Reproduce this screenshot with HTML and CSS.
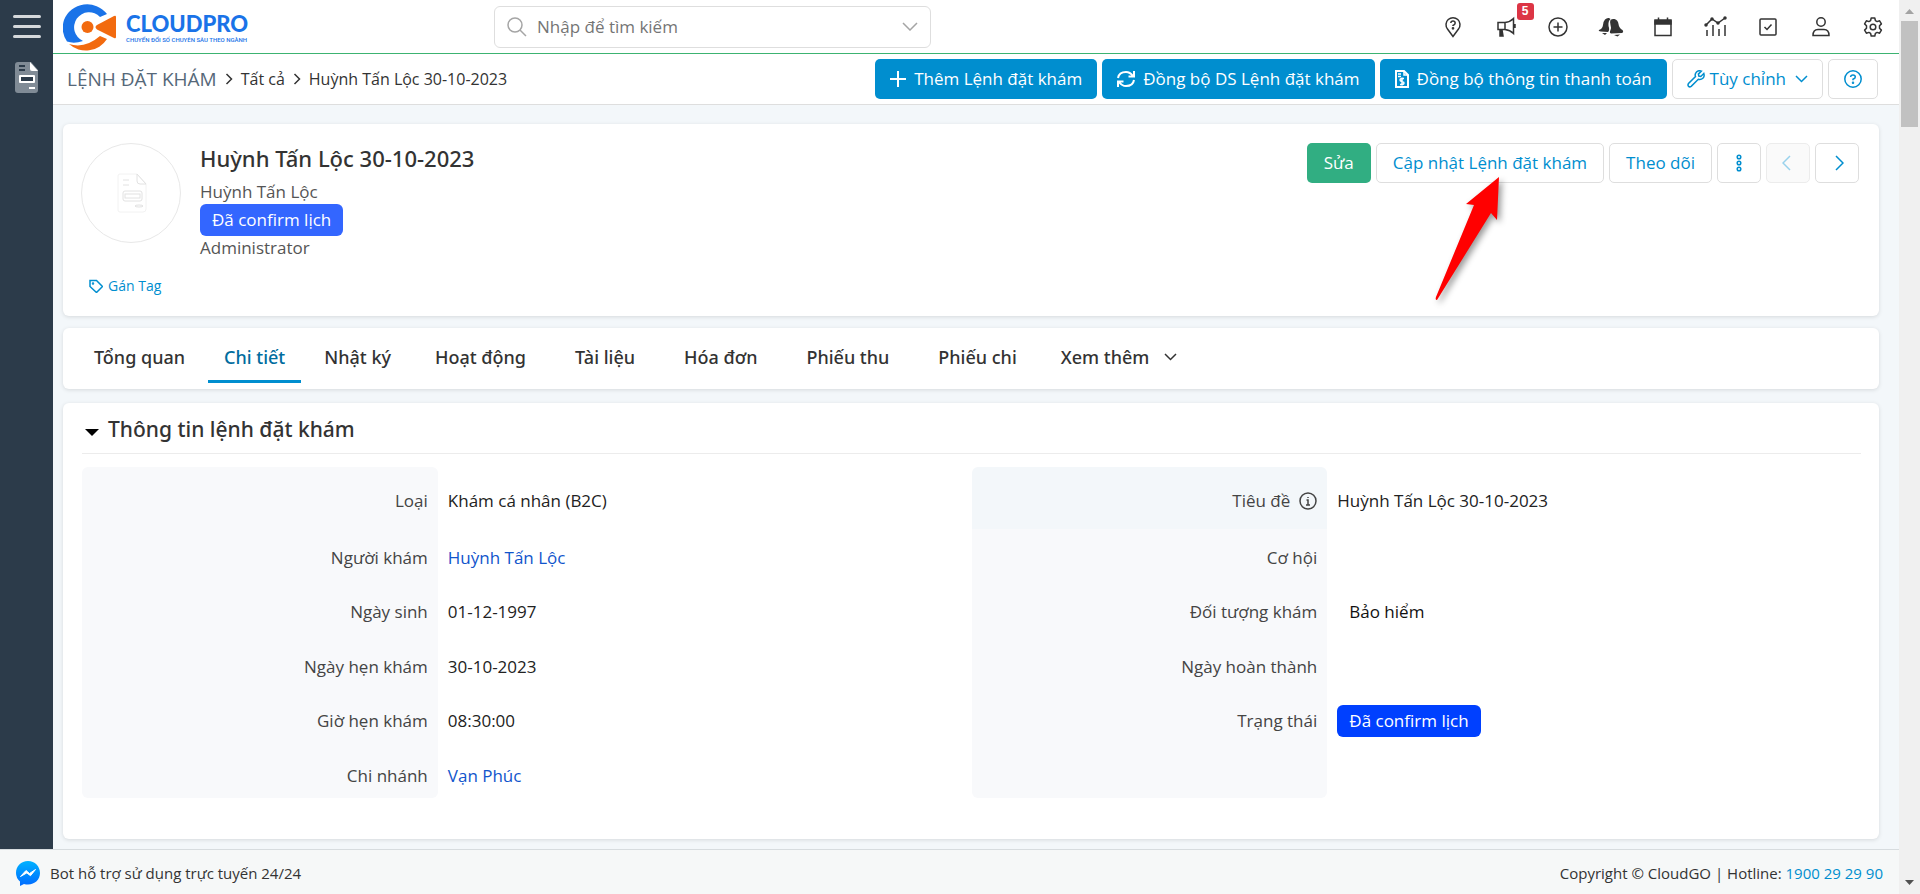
FILE: index.html
```html
<!DOCTYPE html>
<html lang="vi">
<head>
<meta charset="utf-8">
<title>Lệnh đặt khám - CloudPro</title>
<link rel="stylesheet" href="styles.css">
</head>
<body>
<div class="app">
  <div class="shell">
    <nav class="sidebar" aria-label="Menu chính">
      <button class="menu-toggle" aria-label="Mở menu"><span></span><span></span><span></span></button>
      <a class="side-link" href="#" aria-label="Lệnh đặt khám">
        <svg width="24" height="31" viewBox="0 0 24 31"><path d="M3 0h13l7 8v20a3 3 0 0 1-3 3H3a3 3 0 0 1-3-3V3a3 3 0 0 1 3-3z" fill="#808b96"/><path d="M15 0l8 9h-6a2 2 0 0 1-2-2z" fill="#fff"/><path d="M4 4h6M4 8h6" stroke="#2c3b4a" stroke-width="2"/><rect x="4" y="13" width="16" height="8" rx="1" fill="#fff"/><path d="M6 17h12" stroke="#2c3b4a" stroke-width="4"/><path d="M14 26h6" stroke="#fff" stroke-width="2"/></svg>
      </a>
    </nav>
    <div class="page">
      <header class="topbar">
        <a class="logo" href="#" aria-label="CloudPro">
          <svg width="54" height="52" viewBox="0 0 54 50"><path d="M44 12A25 25 0 0 0 1 18A25 25 0 0 0 4 39.500Q11 42 20 39A15 15 0 1 1 37 15z" fill="#1a73e8"/><path d="M6 42Q22 47 37 34L44 37A25 25 0 0 1 6 42z" fill="#f26a0f"/><circle cx="24.500" cy="25" r="6" fill="#f26a0f"/><path d="M34 23L51 14Q53 13 53 15V35Q53 37 51 36L34 27.500Q31 25 34 23z" fill="#f26a0f"/></svg>
          <span class="logo-words"><b>CLOUDPRO</b><small>CHUYỂN ĐỔI SỐ CHUYÊN SÂU THEO NGÀNH</small></span>
        </a>
        <form class="search" role="search">
          <svg width="20" height="20" viewBox="0 0 20 20" class="line"><circle cx="8" cy="8" r="7"/><path d="M13 13l6 6"/></svg>
          <input type="search" aria-label="Tìm kiếm" placeholder="Nhập để tìm kiếm">
          <button type="button" aria-label="Tùy chọn tìm kiếm"><svg width="16" height="9" viewBox="0 0 16 9" class="line"><path d="M1 1l7 7 7-7"/></svg></button>
        </form>
        <div class="tools">
          <button aria-label="Hướng dẫn"><svg width="22" height="22" viewBox="0 0 22 22" class="line"><path d="M11 20.500L5.500 13A7 7 0 1 1 16.500 13z"/><path d="M8.800 7Q9 5 11 5t2.200 2Q13.200 8.300 11 9.500V10"/><circle cx="11" cy="12.300" r=".6"/></svg></button>
          <button aria-label="Thông báo mới"><svg width="22" height="22" viewBox="0 0 22 22" class="line"><path d="M10 6.500H3v7h7M10 6.500Q15 6 18.500 2.500v15Q15 14 10 13.500zM20 8v4"/><path d="M5 14v6h3l-1-6z" fill="currentColor"/></svg><span class="count">5</span></button>
          <button aria-label="Thêm nhanh"><svg width="22" height="22" viewBox="0 0 22 22" class="line"><circle cx="11" cy="11" r="9"/><path d="M11 6.500v9M6.500 11h9"/></svg></button>
          <button aria-label="Chuông báo"><svg width="26" height="22" viewBox="0 0 26 22"><path d="M11 2Q9 1.500 7 3.500Q5.500 5 5 9T1 14Q0 15 3 15.500l7 .5Q12 14 10.500 10Q10 5 12.500 3zM12.500 4Q14 2.500 16.500 3Q20 4 20.500 8t4 6Q26 16 24 17l-11 .5Q11 17 12.500 14Q13.500 12 12.500 9T12.500 4zM4 17h5l-2 2zM16 19l6-.5-2.500 2z" fill="currentColor"/></svg></button>
          <button aria-label="Lịch"><svg width="22" height="22" viewBox="0 0 22 22" class="line"><path d="M3 5h16v14.500H3z"/><path d="M3 4h16v4H3zM6.500 1.500v3M15.500 1.500v3" fill="currentColor"/></svg></button>
          <button aria-label="Báo cáo"><svg width="24" height="22" viewBox="0 0 24 22" class="line"><path d="M2 9l6-6 6 4 7-5M3 14v6M9 9v11M15 13v7M21 9v11"/><g fill="currentColor"><circle cx="2" cy="9" r="1"/><circle cx="8" cy="3" r="1"/><circle cx="14" cy="7" r="1"/><circle cx="21" cy="2" r="1"/></g></svg></button>
          <button aria-label="Công việc"><svg width="22" height="22" viewBox="0 0 22 22" class="line"><rect x="3" y="3" width="16" height="16" rx="1"/><path d="M7.500 11l2.500 2.500 4.500-5"/></svg></button>
          <button aria-label="Tài khoản"><svg width="22" height="22" viewBox="0 0 22 22" class="line"><circle cx="11" cy="6" r="4.200"/><path d="M3 19.500q0-6 5-6h6q5 0 5 6z"/></svg></button>
          <button aria-label="Cài đặt"><svg width="22" height="22" viewBox="0 0 22 22" class="line"><circle cx="11" cy="11" r="2.800"/><path d="M9.200 2h3.600l.6 2.600 1.700 1 2.500-.8 1.800 3.100-1.900 1.900v2.400l1.900 1.900-1.800 3.100-2.500-.8-1.700 1-.6 2.600H9.200l-.6-2.600-1.700-1-2.500.8-1.800-3.100 1.900-1.900V9.800L2.600 7.900l1.800-3.100 2.500.8 1.700-1z" stroke-linejoin="round"/></svg></button>
        </div>
      </header>

      <div class="crumb-bar">
        <nav class="crumbs" aria-label="Đường dẫn">
          <a class="module" href="#">LỆNH ĐẶT KHÁM</a>
          <svg width="8" height="12" viewBox="0 0 8 12" class="line"><path d="M1.500 1l5 5-5 5"/></svg>
          <a href="#">Tất cả</a>
          <svg width="8" height="12" viewBox="0 0 8 12" class="line"><path d="M1.500 1l5 5-5 5"/></svg>
          <span>Huỳnh Tấn Lộc 30-10-2023</span>
        </nav>
        <div class="actions">
          <button class="btn primary"><svg width="16" height="16" viewBox="0 0 16 16" class="line"><path d="M8 0v16M0 8h16" stroke-width="2"/></svg>Thêm Lệnh đặt khám</button>
          <button class="btn primary"><svg width="18" height="18" viewBox="0 0 18 18" class="line"><path d="M1 8Q2 2 9 2q4 0 7 4M17 1v5.500h-5.500M17 10q-1 6-8 6-4 0-7-4M1 17v-5.500h5.500" stroke-width="2"/></svg>Đồng bộ DS Lệnh đặt khám</button>
          <button class="btn primary"><svg width="14" height="18" viewBox="0 0 14 18" class="line"><path d="M1 1h8l4 4v12H1z" stroke-width="2"/><path d="M9 1v4h4M3 4h3M3 6.500h3"/><path d="M9 8.500H6.500Q5 8.700 5 10t2 1.500 2 1.500-1.500 1.500H5M7 7.500v8"/></svg>Đồng bộ thông tin thanh toán</button>
          <button class="btn outline custom"><svg width="18" height="18" viewBox="0 0 18 18" class="line"><path d="M16.800 3.500l-3 3-2-.4-.4-2 3-3Q11.500 0 9.500 2T8.500 6.500L1.500 13.500q-1 1.500 0 2.700t2.700.2L11.300 9.300Q14 10 15.900 8.300T16.800 3.500z"/></svg>Tùy chỉnh<svg class="chev line" width="13" height="8" viewBox="0 0 13 8"><path d="M1 1l5.500 5.500L12 1"/></svg></button>
          <button class="btn outline help" aria-label="Trợ giúp"><svg width="18" height="18" viewBox="0 0 18 18" class="line"><circle cx="9" cy="9" r="8.200"/><path d="M6.600 7Q6.800 5 9 5t2.300 2Q11.300 8.300 9 9.300v1"/><circle cx="9" cy="12.700" r=".5"/></svg></button>
        </div>
      </div>

      <main class="content">
        <section class="card summary">
          <div class="record">
            <div class="avatar">
              <svg width="32" height="40" viewBox="0 0 32 40" fill="none" stroke="#e2e2e2"><path d="M3 1h17l9 10v25a3 3 0 0 1-3 3H3a2 2 0 0 1-2-2V3a2 2 0 0 1 2-2z" stroke="#f2f2f2"/><path d="M20 1v7a3 3 0 0 0 3 3h6z"/><path d="M6 7h6M6 12h6"/><rect x="6" y="18" width="19" height="10" rx="2"/><rect x="8" y="21" width="15" height="4"/><ellipse cx="22" cy="33" rx="4" ry="1"/></svg>
            </div>
            <div class="facts">
              <h1>Huỳnh Tấn Lộc 30-10-2023</h1>
              <span>Huỳnh Tấn Lộc</span>
              <span class="badge soft">Đã confirm lịch</span>
              <span>Administrator</span>
            </div>
            <div class="actions record-actions">
              <button class="btn success">Sửa</button>
              <button class="btn outline">Cập nhật Lệnh đặt khám</button>
              <button class="btn outline">Theo dõi</button>
              <button class="btn outline icon" aria-label="Thao tác khác"><svg width="8" height="20" viewBox="0 0 8 20" class="line"><circle cx="4" cy="4" r="1.800"/><circle cx="4" cy="10" r="1.800"/><circle cx="4" cy="16" r="1.800"/></svg></button>
              <button class="btn outline icon prev" disabled aria-label="Bản ghi trước"><svg width="9" height="16" viewBox="0 0 9 16" class="line"><path d="M8 1L1 8l7 7"/></svg></button>
              <button class="btn outline icon next" aria-label="Bản ghi sau"><svg width="9" height="16" viewBox="0 0 9 16" class="line"><path d="M1 1l7 7-7 7"/></svg></button>
              <svg class="pointer" width="66" height="126" viewBox="0 0 66 126"><path d="M64 1L62 44L56 37L2 124Q0 124 1 121L39 29L31 28z" fill="#f00"/></svg>
            </div>
          </div>
          <a class="tag" href="#"><svg width="14" height="14" viewBox="0 0 14 14" class="line"><path d="M1 1.500h6.500l6 6-6 6L1 7.500z"/><circle cx="4" cy="4.500" r=".5"/></svg>Gán Tag</a>
        </section>

        <nav class="card tabs" aria-label="Thông tin bản ghi">
          <a class="tab" href="#">Tổng quan</a>
          <a class="tab active" href="#" aria-current="page">Chi tiết</a>
          <a class="tab" href="#">Nhật ký</a>
          <a class="tab wide" href="#">Hoạt động</a>
          <a class="tab wide" href="#">Tài liệu</a>
          <a class="tab wide" href="#">Hóa đơn</a>
          <a class="tab wide" href="#">Phiếu thu</a>
          <a class="tab wide" href="#">Phiếu chi</a>
          <button class="tab">Xem thêm<svg width="13" height="8" viewBox="0 0 13 8" class="line"><path d="M1 1l5.500 5.500L12 1"/></svg></button>
        </nav>

        <section class="card details">
          <h2><span class="caret"></span>Thông tin lệnh đặt khám</h2>
          <div class="columns">
            <dl class="fields">
              <dt>Loại</dt><dd>Khám cá nhân (B2C)</dd>
              <dt>Người khám</dt><dd><a href="#">Huỳnh Tấn Lộc</a></dd>
              <dt>Ngày sinh</dt><dd>01-12-1997</dd>
              <dt>Ngày hẹn khám</dt><dd>30-10-2023</dd>
              <dt>Giờ hẹn khám</dt><dd>08:30:00</dd>
              <dt>Chi nhánh</dt><dd><a href="#">Vạn Phúc</a></dd>
            </dl>
            <dl class="fields">
              <dt class="hover">Tiêu đề<svg width="18" height="24" viewBox="0 -3 18 24" class="line"><circle cx="9" cy="9" r="8"/><path d="M7.500 8H9v5M7 13h4M9 5v1"/></svg></dt><dd>Huỳnh Tấn Lộc 30-10-2023</dd>
              <dt>Cơ hội</dt><dd></dd>
              <dt>Đối tượng khám</dt><dd><span class="badge plain">Bảo hiểm</span></dd>
              <dt>Ngày hoàn thành</dt><dd></dd>
              <dt>Trạng thái</dt><dd><span class="badge strong">Đã confirm lịch</span></dd>
              <dt></dt><dd></dd>
            </dl>
          </div>
        </section>
      </main>
    </div>
  </div>
  <footer class="footer">
    <a class="bot" href="#">
      <svg width="26" height="26" viewBox="0 0 26 26"><defs><linearGradient id="chat" x1="0" y1="0" x2="0" y2="1"><stop offset="0" stop-color="#00b2ff"/><stop offset="1" stop-color="#006aff"/></linearGradient></defs><path d="M13 1C6 1 1 6 1 13q0 5 4 8.500V26l4-2q2 .5 4 .5c7 0 12-5 12-11.500S20 1 13 1z" fill="url(#chat)"/><path d="M5.500 16.500l5.500-6 3.500 3 6-4-5 6.200-3.700-2.800z" fill="#fff" stroke="#fff"/></svg>
      Bot hỗ trợ sử dụng trực tuyến 24/24</a>
    <span>Copyright © CloudGO | Hotline: <a class="phone" href="tel:1900292990">1900 29 29 90</a></span>
  </footer>
</div>
<div class="scrollbar" aria-hidden="true">
  <svg width="9" height="5" viewBox="0 0 9 5"><path d="M0 5L4.500 0 9 5z" fill="#a3a3a3"/></svg>
  <div class="thumb"></div>
  <svg class="down" width="9" height="5" viewBox="0 0 9 5"><path d="M0 0h9L4.500 5z" fill="#505050"/></svg>
</div>
</body>
</html>
```
FILE: styles.css
```css
* { box-sizing: border-box; }

body {
  margin: 0;
  display: flex;
  min-height: 100vh;
  font: 400 16px/24px "Open Sans", "Noto Sans", sans-serif;
  color: #333;
}

a { color: inherit; text-decoration: none; }
button { font: inherit; color: inherit; border: 0; background: none; padding: 0; cursor: pointer; }
svg { flex: none; }
.line { fill: none; stroke: currentColor; stroke-width: 1.5; }

.app { flex: 1; min-width: 0; display: flex; flex-direction: column; }
.shell { flex: 1; display: flex; }

/* Sidebar */
.sidebar {
  width: 53px;
  flex: none;
  background: #2c3b4a;
  display: flex;
  flex-direction: column;
  align-items: center;
  padding-top: 15px;
  gap: 24px;
}
.menu-toggle { display: flex; flex-direction: column; gap: 7px; }
.menu-toggle span { width: 28px; height: 3px; border-radius: 2px; background: #d5d8db; }
.side-link { display: flex; }

.page { flex: 1; min-width: 0; display: flex; flex-direction: column; background: #f3f7fa; }

/* Top bar */
.topbar {
  height: 54px;
  background: #fff;
  border-bottom: 1px solid #3cb371;
  display: grid;
  grid-template-columns: 441px minmax(200px, 437px) 1fr;
  align-items: center;
}
.logo { display: flex; align-items: center; gap: 9px; padding-left: 10px; color: #1a73e8; }
.logo-words { display: flex; flex-direction: column; gap: 2px; padding-top: 2px; font-family: Lato, sans-serif; }
.logo-words b { font-size: 22px; line-height: 22px; font-weight: 900; }
.logo-words small { font: 500 6px/6px Roboto, sans-serif; white-space: nowrap; }
.search {
  height: 42px;
  display: flex;
  align-items: center;
  gap: 8px;
  padding: 0 12px;
  border: 1px solid #dedede;
  border-radius: 6px;
  color: #a5a5a5;
  font-size: 17px;
}
.search input { flex: 1; min-width: 0; border: 0; outline: 0; font: inherit; background: none; }
.search input::placeholder { color: #757575; }
.search button { display: flex; }
.tools { justify-self: end; display: flex; justify-content: space-between; width: 460px; margin-right: 6px; }
.tools button { position: relative; width: 40px; height: 40px; display: flex; align-items: center; justify-content: center; }
.count {
  position: absolute;
  top: -4px;
  right: -8px;
  width: 17px;
  height: 17px;
  border-radius: 3px;
  background: #dc3545;
  color: #fff;
  font: 700 12px/17px "Liberation Sans", sans-serif;
}

/* Breadcrumb bar */
.crumb-bar {
  min-height: 51px;
  padding: 0 21px 0 14px;
  display: flex;
  align-items: center;
  justify-content: space-between;
  background: #fff;
  border-bottom: 1px solid #dedede;
}
.crumbs { display: flex; align-items: center; gap: 8px; }
.module { font-size: 19px; color: #566879; }
.actions { position: relative; display: flex; gap: 5px; }
.btn {
  height: 40px;
  padding: 0 14px;
  display: flex;
  align-items: center;
  gap: 8px;
  border: 1px solid transparent;
  border-radius: 5px;
  font-size: 17px;
  white-space: nowrap;
}
.record-actions .btn { padding: 0 16px; }
.primary { background: #008ecf; color: #fff; }
.success { background: #31ae82; color: #fff; }
.outline { background: #fff; color: #008ecf; border-color: #dedede; }
.outline:disabled { background: #fafafa; color: #99d2ec; border-color: #ececec; }
.custom { gap: 5px; }
.chev { margin-left: 4px; }
.help { width: 50px; justify-content: center; }
.record-actions .icon { width: 44px; padding: 0; justify-content: center; }
.record-actions .next { padding-left: 4px; }
.record-actions .prev { padding-right: 4px; }
.pointer { position: absolute; left: 128px; top: 33px; filter: drop-shadow(3px 3px 3px rgba(0, 0, 0, .4)); pointer-events: none; }

/* Cards */
.content { flex: 1; display: flex; flex-direction: column; padding: 19px 20px 10px 10px; }
.card { background: #fff; border-radius: 6px; box-shadow: 0 1px 4px rgba(0, 0, 0, .12); }
.summary { min-height: 192px; padding: 19px 20px 15px 18px; font-size: 17px; margin-bottom: 12px; }
.record { display: flex; align-items: flex-start; gap: 19px; }
.avatar {
  width: 100px;
  height: 100px;
  padding-left: 4px;
  border: 1px solid #e8e8e8;
  border-radius: 50%;
  display: flex;
  align-items: center;
  justify-content: center;
}
.facts { flex: 1; display: flex; flex-direction: column; align-items: flex-start; color: #555; }
.facts h1 { margin: 0 0 7px; font: 500 22px/30px "Noto Sans", sans-serif; color: #333; }
.badge { padding: 0 12px; border-radius: 6px; line-height: 32px; color: #fff; }
.soft { background: #3366ff; }
.strong { background: #0040ff; }
.plain { color: #111; }
.tag { display: inline-flex; align-items: center; gap: 5px; margin: 14px 0 0 8px; font-size: 14px; color: #008ecf; }

.tabs { display: flex; gap: 7px; padding: 0 15px; margin-bottom: 14px; font: 500 18px/24px "Noto Sans", sans-serif; height: 61px; }
.tab { display: flex; align-items: center; gap: 15px; height: 55px; padding: 6px 16px 0; border-bottom: 3px solid transparent; white-space: nowrap; }
.wide { padding: 6px 21px 0; }
.active { color: #006c9e; border-color: #008ecf; }

.details { padding: 0 18px 41px 19px; font-size: 17px; }
.details h2 {
  margin: 0 0 13px;
  display: flex;
  align-items: center;
  gap: 9px;
  height: 51px;
  padding: 2px 0 0 3px;
  border-bottom: 1px solid #ececec;
  font: 500 21px/28px "Noto Sans", sans-serif;
}
.caret { margin-top: 6px; border: 7px solid transparent; border-top-color: #000; border-bottom: 0; }
.columns { display: grid; grid-template-columns: 1fr 1fr; }
.fields {
  margin: 0;
  display: grid;
  grid-template-columns: 40% 1fr;
  grid-template-rows: 62px 54px 55px 54px 55px 51px;
}
.fields dt {
  display: flex;
  align-items: flex-start;
  justify-content: flex-end;
  gap: 9px;
  padding: 17px 10px 0 0;
  background: #f8f9fb;
  color: #444;
}
.fields dt:first-of-type { padding-top: 22px; border-radius: 6px 6px 0 0; }
.fields dt:last-of-type { border-radius: 0 0 6px 6px; }
.fields .hover { background: #f3f7fa; }
.fields dd { display: flex; align-items: flex-start; margin: 0; padding: 17px 0 0 10px; color: #222; }
.fields dd:first-of-type { padding-top: 22px; }
.fields dd a { color: #1155cc; }
.fields .badge { margin: -4px 0; }

/* Footer */
.footer {
  min-height: 45px;
  padding: 2px 16px 0 15px;
  display: flex;
  align-items: center;
  justify-content: space-between;
  background: #f6f8f8;
  border-top: 1px solid #d7dcdf;
  font-size: 15px;
}
.bot { display: flex; align-items: center; gap: 9px; }
.phone { color: #008ecf; }

/* Scroll gutter */
.scrollbar {
  width: 21px;
  flex: none;
  background: #f0f0f0;
  display: flex;
  flex-direction: column;
  align-items: center;
  padding: 9px 0;
}
.thumb { width: 17px; height: 106px; margin-top: 7px; background: #c1c1c1; }
.down { margin-top: auto; }
```
